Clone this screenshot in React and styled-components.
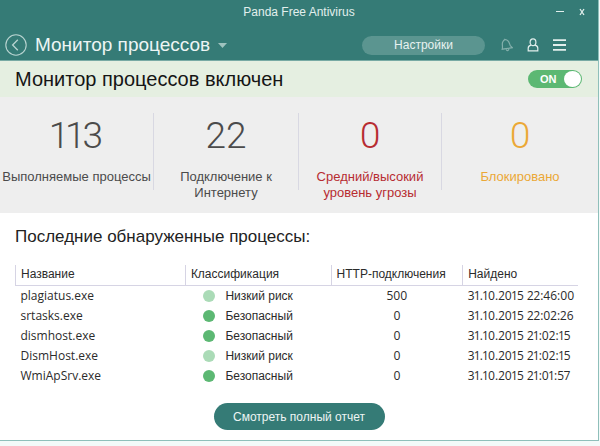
import { useState } from "react";
import styled, { createGlobalStyle } from "styled-components";

const GlobalStyle = createGlobalStyle`
  * {
    box-sizing: border-box;
  }

  body {
    margin: 0;
    background: #f3faf9;
    color: #2b2b2b;
    font-family: "Liberation Sans", Arial, sans-serif;
  }

  button {
    font-family: inherit;
    cursor: pointer;
  }
`;

const Window = styled.main`
  margin-right: 1px;
  background: #fff;
  border-right: 1px solid #8fbfba;
  border-bottom: 1px solid #8fbfba;
`;

const Header = styled.header`
  background: #357b76;
  color: #e2efed;
  border-bottom: 1px solid #78aaa4;
`;

const TitleBar = styled.div`
  display: grid;
  grid-template-columns: 1fr auto 1fr;
  align-items: center;
  height: 24px;
`;

const AppName = styled.span`
  grid-column: 2;
  font-size: 12px;
`;

const WindowButtons = styled.div`
  display: flex;
  justify-content: flex-end;
  gap: 15px;
  padding-right: 13px;
`;

const IconButton = styled.button`
  display: flex;
  padding: 0;
  border: 0;
  background: none;
  color: inherit;
  opacity: ${(props) => (props.$dim ? 0.45 : 1)};
`;

const NavBar = styled.nav`
  display: flex;
  align-items: center;
  height: 36px;
  padding: 6px 32px 0 5px;
`;

const PageMenu = styled.button`
  display: flex;
  align-items: center;
  gap: 8px;
  margin: 0 auto 0 8px;
  padding: 0;
  border: 0;
  background: none;
  color: #edf5f4;
  font-size: 19px;
`;

const SettingsButton = styled.button`
  width: 123px;
  height: 19px;
  margin-right: 16px;
  padding: 0;
  border: 0;
  border-radius: 10px;
  background: #5b9590;
  color: #e8f2f0;
  font-size: 12px;
`;

const HeaderIcons = styled.div`
  display: flex;
  align-items: center;
  gap: 14px;
`;

const StatusBar = styled.section`
  display: flex;
  align-items: center;
  justify-content: space-between;
  height: 36px;
  padding: 0 16px 0 15px;
  background: #e5efe1;
`;

const StatusTitle = styled.h1`
  margin: 0;
  color: #151515;
  font-size: 20px;
  font-weight: 400;
`;

const Toggle = styled.label`
  display: flex;
  flex-direction: ${(props) => (props.$on ? "row" : "row-reverse")};
  align-items: center;
  justify-content: space-between;
  width: 54px;
  height: 18px;
  padding: ${(props) => (props.$on ? "0 1px 0 12px" : "0 8px 0 1px")};
  border-radius: 9px;
  background: ${(props) => (props.$on ? "#5cb873" : "#9aa5a3")};
  color: #fff;
  font-size: 11px;
  font-weight: 700;
  cursor: pointer;
`;

const ToggleInput = styled.input`
  appearance: none;
  width: 17px;
  height: 16px;
  margin: 0;
  border-radius: 50%;
  background: #fff;
  cursor: pointer;
`;

const Stats = styled.section`
  display: grid;
  grid-template-columns: 154fr 145fr 143fr 156fr;
  padding: 16px 0 10px;
  background: #eee;
`;

const Stat = styled.div`
  min-height: 90px;
  color: ${(props) => props.$color};
  text-align: center;
`;

const StatBody = styled.div`
  height: 77px;
  border-right: ${(props) => (props.$last ? "0" : "1px solid #d8d8e2")};
`;

const StatValue = styled.div`
  height: 56px;
  font-family: Roboto, sans-serif;
  font-size: 37px;
  font-variant-numeric: proportional-nums;
  font-weight: 300;
  line-height: 46px;
`;

const StatLabel = styled.div`
  font-size: 13px;
  line-height: 16px;
`;

const Processes = styled.section`
  display: flex;
  flex-direction: column;
  padding: 14px 20px 10px 15px;
`;

const SectionTitle = styled.h2`
  margin: 0 0 18px;
  color: #222;
  font-size: 17px;
  font-weight: 400;
  line-height: 20px;
`;

const Table = styled.table`
  width: 100%;
  border-collapse: collapse;
  table-layout: fixed;
  font-size: 12px;
`;

const HeadCell = styled.th`
  width: ${(props) => props.$width};
  height: 20px;
  padding: 0 0 1px 5px;
  border-bottom: 1px solid #d6d4e4;
  border-left: 1px solid #d6d4e4;
  font-weight: 400;
  text-align: left;
  white-space: nowrap;
`;

const Cell = styled.td`
  height: 20px;
  padding: 1px 5px 0;
  font-family: ${(props) => (props.$latin ? '"Open Sans", sans-serif' : "inherit")};
  font-variant-numeric: proportional-nums;
  line-height: 18px;
  text-align: ${(props) => (props.$center ? "center" : "left")};
  white-space: nowrap;
`;

const Risk = styled.span`
  display: flex;
  align-items: center;
  gap: 10px;
  padding-left: 13px;

  &::before {
    content: "";
    width: 12px;
    height: 12px;
    border-radius: 50%;
    background: ${(props) => (props.$low ? "#abdbb7" : "#5cb873")};
  }
`;

const Footer = styled.footer`
  display: flex;
  justify-content: center;
  padding: 8px 0 10px;
`;

const ReportButton = styled.button`
  width: 171px;
  height: 27px;
  padding: 0;
  border: 0;
  border-radius: 14px;
  background: #357b76;
  color: #edf5f4;
  font-size: 12px;
`;

const stats = [
  { value: 113, label: "Выполняемые процессы", color: "#4b4b4b" },
  { value: 22, label: "Подключение к Интернету", color: "#4b4b4b" },
  { value: 0, label: "Средний/высокий уровень угрозы", color: "#b72c31" },
  { value: 0, label: "Блокировано", color: "#eba836" },
];

const processes = [
  { name: "plagiatus.exe", low: true, http: 500, found: "31.10.2015 22:46:00" },
  { name: "srtasks.exe", low: false, http: 0, found: "31.10.2015 22:02:26" },
  { name: "dismhost.exe", low: false, http: 0, found: "31.10.2015 21:02:15" },
  { name: "DismHost.exe", low: true, http: 0, found: "31.10.2015 21:02:15" },
  { name: "WmiApSrv.exe", low: false, http: 0, found: "31.10.2015 21:01:57" },
];

const BackIcon = () => (
  <svg width="22" height="22" viewBox="0 0 22 22" fill="none" stroke="#b9d4d1">
    <circle cx="11" cy="11" r="10.2" strokeWidth="1.1" />
    <path d="M12.8 5.8 7.6 11l5.2 5.2" strokeWidth="1.3" />
  </svg>
);

const CaretIcon = () => (
  <svg width="9" height="5" viewBox="0 0 9 5" fill="#9fc3bf">
    <path d="M0 0h9L4.5 5z" />
  </svg>
);

const BellIcon = () => (
  <svg width="12" height="14" viewBox="0 0 12 14" fill="none" stroke="currentColor" strokeWidth="1.2">
    <path d="M1.2 11.2C2 8.5.8 6.5 1.6 4.2 2.3 2.5 4 1.3 5.8 2c2.4 1 2.6 3.5 3.5 5.6l2.1 2.1-10.2 1.5z" />
    <path d="M3.4.9 4.2 2M5.2 11.4c.4 1.6 2.4 1.6 2.7-.4" />
  </svg>
);

const UserIcon = () => (
  <svg width="12" height="14" viewBox="0 0 12 14" fill="none" stroke="currentColor" strokeWidth="1.2">
    <ellipse cx="6" cy="4.2" rx="2.9" ry="3.4" />
    <path d="M4 7.2C2 7.7 1.2 8.7 1.2 10.2v2.6h9.6v-2.6C10.8 8.7 10 7.7 8 7.2" />
  </svg>
);

const MenuIcon = () => (
  <svg width="13" height="12" viewBox="0 0 13 12" stroke="currentColor" strokeWidth="1.8">
    <path d="M0 1.1h13M0 6h13M0 10.9h13" />
  </svg>
);

const MinimizeIcon = () => (
  <svg width="8" height="8" viewBox="0 0 8 8" stroke="currentColor">
    <path d="M0 3.5h8" />
  </svg>
);

const CloseIcon = () => (
  <svg width="6" height="8" viewBox="0 0 6 8" stroke="currentColor" strokeWidth="1.3">
    <path d="M1 1l4 6M5 1 1 7" />
  </svg>
);

const ProcessTable = () => (
  <Table>
    <thead>
      <tr>
        <HeadCell $width="30.2%">Название</HeadCell>
        <HeadCell $width="25.9%">Классификация</HeadCell>
        <HeadCell $width="23.4%">HTTP-подключения</HeadCell>
        <HeadCell>Найдено</HeadCell>
      </tr>
    </thead>
    <tbody>
      {processes.map((item) => (
        <tr key={item.name}>
          <Cell $latin>{item.name}</Cell>
          <Cell>
            <Risk $low={item.low}>{item.low ? "Низкий риск" : "Безопасный"}</Risk>
          </Cell>
          <Cell $latin $center>{item.http}</Cell>
          <Cell $latin>{item.found}</Cell>
        </tr>
      ))}
    </tbody>
  </Table>
);

const App = () => {
  const [enabled, setEnabled] = useState(true);

  return (
    <>
      <GlobalStyle />
      <Window>
        <Header>
          <TitleBar>
            <AppName>Panda Free Antivirus</AppName>
            <WindowButtons>
              <IconButton aria-label="Свернуть"><MinimizeIcon /></IconButton>
              <IconButton aria-label="Закрыть"><CloseIcon /></IconButton>
            </WindowButtons>
          </TitleBar>
          <NavBar>
            <IconButton aria-label="Назад"><BackIcon /></IconButton>
            <PageMenu>
              Монитор процессов
              <CaretIcon />
            </PageMenu>
            <SettingsButton>Настройки</SettingsButton>
            <HeaderIcons>
              <IconButton $dim aria-label="Уведомления"><BellIcon /></IconButton>
              <IconButton aria-label="Профиль"><UserIcon /></IconButton>
              <IconButton aria-label="Меню"><MenuIcon /></IconButton>
            </HeaderIcons>
          </NavBar>
        </Header>

        <StatusBar>
          <StatusTitle>Монитор процессов включен</StatusTitle>
          <Toggle $on={enabled}>
            {enabled ? "ON" : "OFF"}
            <ToggleInput
              type="checkbox"
              checked={enabled}
              onChange={() => setEnabled(!enabled)}
            />
          </Toggle>
        </StatusBar>

        <Stats>
          {stats.map((stat, index) => (
            <Stat key={stat.label} $color={stat.color}>
              <StatBody $last={index === stats.length - 1}>
                <StatValue>{stat.value}</StatValue>
                <StatLabel>{stat.label}</StatLabel>
              </StatBody>
            </Stat>
          ))}
        </Stats>

        <Processes>
          <SectionTitle>Последние обнаруженные процессы:</SectionTitle>
          <ProcessTable />
        </Processes>

        <Footer>
          <ReportButton>Смотреть полный отчет</ReportButton>
        </Footer>
      </Window>
    </>
  );
};

export default App;
